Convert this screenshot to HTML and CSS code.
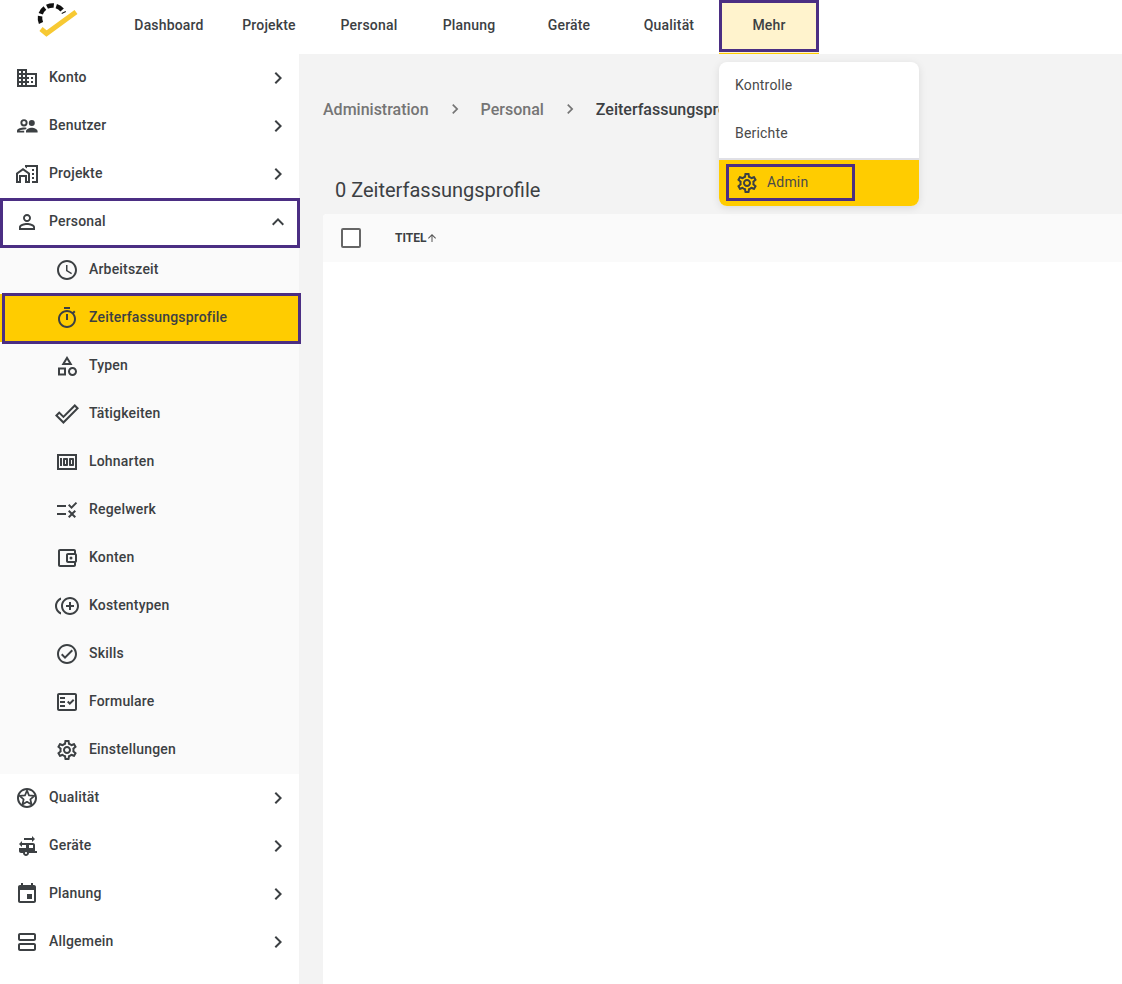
FILE: index.html
```html
<!doctype html>
<html lang="de">

<head>
    <meta charset="utf-8">
    <title>Zeiterfassungsprofile</title>
    <link rel="stylesheet" href="styles.css">
</head>

<body>
    <svg class="sprite" xmlns="http://www.w3.org/2000/svg">
        <symbol id="i-right" viewBox="0 0 24 24"><path d="M10 6L8.59 7.41 13.17 12l-4.58 4.59L10 18l6-6z"/></symbol>
        <symbol id="i-up" viewBox="0 0 24 24"><path d="M12 8l-6 6 1.41 1.41L12 10.83l4.59 4.58L18 14z"/></symbol>
        <symbol id="i-gear" viewBox="0 0 24 24"><path d="M19.43 12.98c.04-.32.07-.64.07-.98 0-.34-.03-.66-.07-.98l2.11-1.65c.19-.15.24-.42.12-.64l-2-3.46c-.09-.16-.26-.25-.44-.25-.06 0-.12.01-.17.03l-2.49 1c-.52-.4-1.08-.73-1.69-.98l-.38-2.65C14.46 2.18 14.25 2 14 2h-4c-.25 0-.46.18-.49.42l-.38 2.65c-.61.25-1.17.59-1.69.98l-2.49-1c-.06-.02-.12-.03-.18-.03-.17 0-.34.09-.43.25l-2 3.46c-.13.22-.07.49.12.64l2.11 1.65c-.04.32-.07.65-.07.98 0 .33.03.66.07.98l-2.11 1.65c-.19.15-.24.42-.12.64l2 3.46c.09.16.26.25.44.25.06 0 .12-.01.17-.03l2.49-1c.52.4 1.08.73 1.69.98l.38 2.65c.03.24.24.42.49.42h4c.25 0 .46-.18.49-.42l.38-2.65c.61-.25 1.17-.59 1.69-.98l2.49 1c.06.02.12.03.18.03.17 0 .34-.09.43-.25l2-3.46c.12-.22.07-.49-.12-.64l-2.11-1.65zm-1.98-1.71c.04.31.05.52.05.73 0 .21-.02.43-.05.73l-.14 1.13.89.7 1.08.84-.7 1.21-1.27-.51-1.04-.42-.9.68c-.43.32-.84.56-1.25.73l-1.06.43-.16 1.13-.2 1.35h-1.4l-.19-1.35-.16-1.13-1.06-.43c-.43-.18-.83-.41-1.23-.71l-.91-.7-1.06.43-1.27.51-.7-1.21 1.08-.84.89-.7-.14-1.13c-.03-.31-.05-.54-.05-.74s.02-.43.05-.73l.14-1.13-.89-.7-1.08-.84.7-1.21 1.27.51 1.04.42.9-.68c.43-.32.84-.56 1.25-.73l1.06-.43.16-1.13.2-1.35h1.39l.19 1.35.16 1.13 1.06.43c.43.18.83.41 1.23.71l.91.7 1.06-.43 1.27-.51.7 1.21-1.07.85-.89.7.14 1.13zM12 8c-2.21 0-4 1.79-4 4s1.79 4 4 4 4-1.79 4-4-1.79-4-4-4zm0 6c-1.1 0-2-.9-2-2s.9-2 2-2 2 .9 2 2-.9 2-2 2z"/></symbol>
    </svg>

    <header class="topbar">
        <div class="logo">
            <svg width="50" height="40" viewBox="0 0 50 40">
                <path class="logo-arc" d="M11 23 A12.5 12.5 0 0 1 34 13"/>
                <path class="logo-check" d="M11 29 L16.5 33.5 L46 12"/>
            </svg>
        </div>
        <nav class="topnav">
            <a class="topnav-item">Dashboard</a>
            <a class="topnav-item">Projekte</a>
            <a class="topnav-item">Personal</a>
            <a class="topnav-item">Planung</a>
            <a class="topnav-item">Geräte</a>
            <a class="topnav-item">Qualität</a>
            <a class="topnav-item topnav-active">Mehr<span class="mark mark-mehr"></span></a>
        </nav>
    </header>

    <div class="dropdown">
        <a class="dropdown-item">Kontrolle</a>
        <a class="dropdown-item">Berichte</a>
        <a class="dropdown-admin">
            <svg class="icon"><use href="#i-gear"/></svg>
            <span class="admin-label">Admin</span>
            <span class="mark mark-admin"></span>
        </a>
    </div>

    <div class="layout">
        <aside class="sidebar">
            <a class="row">
                <svg class="icon" viewBox="0 0 24 24"><path d="M12 7V3H2v18h20V7H12zM6 19H4v-2h2v2zm0-4H4v-2h2v2zm0-4H4V9h2v2zm0-4H4V5h2v2zm4 12H8v-2h2v2zm0-4H8v-2h2v2zm0-4H8V9h2v2zm0-4H8V5h2v2zm10 12h-8v-2h2v-2h-2v-2h2v-2h-2V9h8v10zm-2-8h-2v2h2v-2zm0 4h-2v2h2v-2z"/></svg>
                <span>Konto</span>
                <svg class="icon caret"><use href="#i-right"/></svg>
            </a>
            <a class="row">
                <svg class="icon" viewBox="0 0 24 24"><path fill-rule="evenodd" d="M9 5.2a3.6 3.6 0 1 1 0 7.2 3.6 3.6 0 0 1 0-7.2zm0 1.9a1.7 1.7 0 1 0 0 3.4 1.7 1.7 0 0 0 0-3.4zM2 18.6v-1.7c0-2.3 4.6-3.3 7-3.3.8 0 1.8.1 2.8.4l-1.4 1.6c-.5-.1-1-.1-1.4-.1-2 0-4.5.8-5 1.3h5.2v1.8H2zM16.8 6a3 3 0 1 1 0 6 3 3 0 0 1 0-6zM11 18.6v-1.3c0-2.3 3.6-3.5 5.8-3.5s5.8 1.2 5.8 3.5v1.3H11z"/></svg>
                <span>Benutzer</span>
                <svg class="icon caret"><use href="#i-right"/></svg>
            </a>
            <a class="row">
                <svg class="icon" viewBox="0 0 24 24"><path d="M1 11v10h5v-6h4v6h5V11L8 6l-7 5zm12 8h-1v-6H4v6H3v-7l5-3.5 5 3.5v7zM17 7h2v2h-2zm0 4h2v2h-2zm0 4h2v2h-2zM10 3v1.97l2 1.43V5h9v14h-4v2h6V3z"/></svg>
                <span>Projekte</span>
                <svg class="icon caret"><use href="#i-right"/></svg>
            </a>
            <a class="row">
                <svg class="icon" viewBox="0 0 24 24"><path d="M12 5.9c1.16 0 2.1.94 2.1 2.1s-.94 2.1-2.1 2.1S9.9 9.16 9.9 8s.94-2.1 2.1-2.1m0 9c2.97 0 6.1 1.46 6.1 2.1v1.1H5.9V17c0-.64 3.13-2.1 6.1-2.1M12 4C9.79 4 8 5.79 8 8s1.79 4 4 4 4-1.79 4-4-1.79-4-4-4zm0 9c-2.67 0-8 1.34-8 4v3h16v-3c0-2.66-5.33-4-8-4z"/></svg>
                <span>Personal</span>
                <svg class="icon caret"><use href="#i-up"/></svg>
                <span class="mark mark-personal"></span>
            </a>

            <div class="subnav">
                <a class="row sub">
                    <svg class="icon" viewBox="0 0 24 24"><path d="M11.99 2C6.47 2 2 6.48 2 12s4.47 10 9.99 10C17.52 22 22 17.52 22 12S17.52 2 11.99 2zM12 20c-4.42 0-8-3.58-8-8s3.58-8 8-8 8 3.58 8 8-3.58 8-8 8zm.5-13H11v6l5.25 3.15.75-1.23-4.5-2.67z"/></svg>
                    <span>Arbeitszeit</span>
                </a>
                <a class="row sub sub-active">
                    <svg class="icon" viewBox="0 0 24 24"><path d="M15 1H9v2h6V1zm-4 13h2V8h-2v6zm8.03-6.61l1.42-1.42c-.43-.51-.9-.99-1.41-1.41l-1.42 1.42C16.07 4.74 14.12 4 12 4c-4.97 0-9 4.03-9 9s4.02 9 9 9 9-4.03 9-9c0-2.12-.74-4.07-1.97-5.61zM12 20c-3.87 0-7-3.13-7-7s3.13-7 7-7 7 3.13 7 7-3.13 7-7 7z"/></svg>
                    <span>Zeiterfassungsprofile</span>
                    <span class="mark mark-sub"></span>
                </a>
                <a class="row sub">
                    <svg class="icon" viewBox="0 0 24 24"><path d="M12 2l-5.5 9h11L12 2zm0 3.84L13.93 9h-3.87L12 5.84zM17.5 13c-2.49 0-4.5 2.01-4.5 4.5s2.01 4.5 4.5 4.5 4.5-2.01 4.5-4.5-2.01-4.5-4.5-4.5zm0 7c-1.38 0-2.5-1.12-2.5-2.5s1.12-2.5 2.5-2.5 2.5 1.12 2.5 2.5-1.12 2.5-2.5 2.5zM3 21.5h8v-8H3v8zm2-6h4v4H5v-4z"/></svg>
                    <span>Typen</span>
                </a>
                <a class="row sub">
                    <svg class="icon" viewBox="0 0 24 24"><path d="M19.77 4.93l1.4 1.4L8.43 19.07l-5.6-5.6 1.4-1.4 4.2 4.2L19.77 4.93m0-2.83L8.43 13.44l-4.2-4.2L0 13.47l8.43 8.43L24 6.33 19.77 2.1z"/></svg>
                    <span>Tätigkeiten</span>
                </a>
                <a class="row sub">
                    <svg class="icon" viewBox="0 0 24 24"><path d="M5 8h2v8H5zm7 0H9c-.55 0-1 .45-1 1v6c0 .55.45 1 1 1h3c.55 0 1-.45 1-1V9c0-.55-.45-1-1-1zm-1 6h-1v-4h1v4zm7-6h-3c-.55 0-1 .45-1 1v6c0 .55.45 1 1 1h3c.55 0 1-.45 1-1V9c0-.55-.45-1-1-1zm-1 6h-1v-4h1v4z"/><path d="M2 4v16h20V4H2zm2 14V6h16v12H4z"/></svg>
                    <span>Lohnarten</span>
                </a>
                <a class="row sub">
                    <svg class="icon" viewBox="0 0 24 24"><path d="M16.54 11L13 7.46l1.41-1.41 2.12 2.12 4.24-4.24 1.41 1.41L16.54 11zM11 7H2v2h9V7zm10 6.41L19.59 12 17 14.59 14.41 12 13 13.41 15.59 16 13 18.59 14.41 20 17 17.41 19.59 20 21 18.59 18.41 16 21 13.41zM11 15H2v2h9v-2z"/></svg>
                    <span>Regelwerk</span>
                </a>
                <a class="row sub">
                    <svg class="icon" viewBox="0 0 24 24"><path d="M21 7.28V5c0-1.1-.9-2-2-2H5c-1.11 0-2 .9-2 2v14c0 1.1.89 2 2 2h14c1.1 0 2-.9 2-2v-2.28c.59-.35 1-.98 1-1.72V9c0-.74-.41-1.37-1-1.72zM20 9v6h-7V9h7zM5 19V5h14v2h-6c-1.1 0-2 .9-2 2v6c0 1.1.9 2 2 2h6v2H5z"/><circle cx="16" cy="12" r="1.5"/></svg>
                    <span>Konten</span>
                </a>
                <a class="row sub">
                    <svg class="icon" viewBox="0 0 24 24"><path d="M16 8h-2v3h-3v2h3v3h2v-3h3v-2h-3zM2 12c0-2.79 1.64-5.2 4.01-6.32V3.52C2.52 4.76 0 8.09 0 12s2.52 7.24 6.01 8.48v-2.16C3.64 17.2 2 14.79 2 12zm13-9c-4.96 0-9 4.04-9 9s4.04 9 9 9 9-4.04 9-9-4.04-9-9-9zm0 16c-3.86 0-7-3.14-7-7s3.14-7 7-7 7 3.14 7 7-3.14 7-7 7z"/></svg>
                    <span>Kostentypen</span>
                </a>
                <a class="row sub">
                    <svg class="icon" viewBox="0 0 24 24"><path d="M12 2C6.48 2 2 6.48 2 12s4.48 10 10 10 10-4.48 10-10S17.52 2 12 2zm0 18c-4.41 0-8-3.59-8-8s3.59-8 8-8 8 3.59 8 8-3.59 8-8 8zm4.59-12.42L10 14.17l-2.59-2.58L6 13l4 4 8-8z"/></svg>
                    <span>Skills</span>
                </a>
                <a class="row sub">
                    <svg class="icon" viewBox="0 0 24 24"><path d="M20 3H4c-1.1 0-2 .9-2 2v14c0 1.1.9 2 2 2h16c1.1 0 2-.9 2-2V5c0-1.1-.9-2-2-2zm0 16H4V5h16v14z"/><path d="M19.41 10.42L17.99 9l-3.17 3.17-1.41-1.42L12 12.16 14.82 15zM5 7h5v2H5zM5 11h5v2H5zM5 15h5v2H5z"/></svg>
                    <span>Formulare</span>
                </a>
                <a class="row sub">
                    <svg class="icon"><use href="#i-gear"/></svg>
                    <span>Einstellungen</span>
                </a>
            </div>

            <a class="row">
                <svg class="icon" viewBox="0 0 24 24"><path d="M11.99 2C6.47 2 2 6.48 2 12s4.47 10 9.99 10C17.52 22 22 17.52 22 12S17.52 2 11.99 2zM12 20c-4.42 0-8-3.58-8-8s3.58-8 8-8 8 3.58 8 8-3.58 8-8 8z"/><polygon class="star" points="12,4.5 14.06,9.47 19.4,9.9 15.33,13.38 16.6,18.6 12,15.8 7.4,18.6 8.67,13.38 4.6,9.9 9.94,9.47"/></svg>
                <span>Qualität</span>
                <svg class="icon caret"><use href="#i-right"/></svg>
            </a>
            <a class="row">
                <svg class="icon" viewBox="0 0 24 24"><path d="M20 17v-6c0-1.1-.9-2-2-2H7V7l-3 3 3 3v-2h4v3H4v3c0 1.1.9 2 2 2h2c0 1.66 1.34 3 3 3s3-1.34 3-3h8v-2h-2zm-9 3c-.55 0-1-.45-1-1s.45-1 1-1 1 .45 1 1-.45 1-1 1zm7-6h-4v-3h4v3zM17 2v2H9v2h8v2l3-3z"/></svg>
                <span>Geräte</span>
                <svg class="icon caret"><use href="#i-right"/></svg>
            </a>
            <a class="row">
                <svg class="icon" viewBox="0 0 24 24"><path d="M17 12h-5v5h5v-5zM16 1v2H8V1H6v2H5c-1.11 0-1.99.9-1.99 2L3 19c0 1.1.89 2 2 2h14c1.1 0 2-.9 2-2V5c0-1.1-.9-2-2-2h-1V1h-2zm3 18H5V8h14v11z"/></svg>
                <span>Planung</span>
                <svg class="icon caret"><use href="#i-right"/></svg>
            </a>
            <a class="row">
                <svg class="icon" viewBox="0 0 24 24"><path fill-rule="evenodd" d="M5 3h14c1.1 0 2 .9 2 2v4c0 1.1-.9 2-2 2H5c-1.1 0-2-.9-2-2V5c0-1.1.9-2 2-2zm0 2v4h14V5H5zm0 8h14c1.1 0 2 .9 2 2v4c0 1.1-.9 2-2 2H5c-1.1 0-2-.9-2-2v-4c0-1.1.9-2 2-2zm0 2v4h14v-4H5z"/></svg>
                <span>Allgemein</span>
                <svg class="icon caret"><use href="#i-right"/></svg>
            </a>
        </aside>

        <main class="content">
            <div class="breadcrumb">
                <span>Administration</span>
                <span class="crumb-sep"><svg><use href="#i-right"/></svg></span>
                <span>Personal</span>
                <span class="crumb-sep"><svg><use href="#i-right"/></svg></span>
                <span class="crumb-current">Zeiterfassungsprofile</span>
            </div>
            <h1 class="title">0 Zeiterfassungsprofile</h1>
            <section class="table">
                <div class="table-head">
                    <span class="checkbox"></span>
                    <span class="col-title">TITEL</span>
                    <svg class="sort" viewBox="0 0 24 24"><path d="M4 12l1.41 1.41L11 7.83V20h2V7.83l5.58 5.59L20 12l-8-8-8 8z"/></svg>
                </div>
            </section>
        </main>
    </div>
</body>

</html>
```

FILE: styles.css
```css
* {
    box-sizing: border-box;
}
html, body {
    height: 100%;
}
body {
    margin: 0;
    position: relative;
    overflow: hidden;
    background: #fff;
    color: #3c4043;
    font-family: Roboto, "Liberation Sans", sans-serif;
    font-size: 14px;
    font-weight: 480;
    letter-spacing: .18px;
}
.sprite {
    display: none;
}
.icon {
    width: 24px;
    height: 24px;
    flex: none;
    fill: #3c4043;
}
.star {
    fill: none;
    stroke: #3c4043;
    stroke-width: 1.8;
    stroke-linejoin: round;
}

/* annotation frames drawn over the page */
.mark {
    position: absolute;
    border: 3px solid #4b2e83;
    pointer-events: none;
    z-index: 5;
}
.mark-mehr {
    inset: 0;
    bottom: 1px;
}
.mark-personal {
    inset: 0 -1px -2px 0;
}
.mark-sub {
    inset: -1px -2px -2px 2px;
}
.mark-admin {
    left: 7px;
    top: 4px;
    width: 129px;
    height: 37px;
}

/* top bar */
.topbar {
    display: flex;
    height: 54px;
    background: #fff;
}
.logo {
    width: 119px;
    padding: 0 0 0 30px;
    flex: none;
}
.logo-arc {
    fill: none;
    stroke: #111;
    stroke-width: 4.5;
    stroke-dasharray: 7 2.5;
}
.logo-check {
    fill: none;
    stroke: #f7c933;
    stroke-width: 5;
}
.topnav {
    display: flex;
}
.topnav-item {
    position: relative;
    width: 100px;
    height: 54px;
    display: flex;
    align-items: center;
    justify-content: center;
    padding-bottom: 5px;
    line-height: 20px;
}
.topnav-active {
    background: #fff3cd;
    border-bottom: 1px solid #ffcc00;
    padding-bottom: 4px;
}

/* dropdown of "Mehr" */
.dropdown {
    position: absolute;
    left: 719px;
    top: 62px;
    width: 200px;
    height: 144px;
    z-index: 4;
    background: #fff;
    border-radius: 8px;
    box-shadow: 0 2px 8px rgba(0, 0, 0, .1);
    overflow: hidden;
    font-weight: 400;
    color: #4a4a4a;
}
.dropdown-item {
    display: flex;
    align-items: center;
    height: 48px;
    padding: 0 16px 2px;
}
.dropdown-admin {
    position: relative;
    display: flex;
    align-items: center;
    gap: 8px;
    height: 48px;
    padding: 0 0 0 16px;
    background: #ffcc00;
    border-top: 2px solid #e0e0e6;
}
.admin-label {
    padding-bottom: 2px;
}

/* sidebar and main */
.layout {
    display: flex;
    height: 930px;
}
.sidebar {
    width: 299px;
    flex: none;
    background: #fff;
    position: relative;
}
.row {
    position: relative;
    display: flex;
    align-items: center;
    gap: 10px;
    height: 48px;
    padding: 0 9px 0 15px;
}
.row > span {
    padding-bottom: 2px;
}
.caret {
    margin-left: auto;
}
.subnav {
    background: #fafafa;
}
.sub {
    padding-left: 55px;
}
.sub-active {
    background: #ffcc00;
}
.content {
    flex: 1;
    min-width: 0;
    background: #f3f3f3;
    padding: 43px 0 0 24px;
}
.breadcrumb {
    display: flex;
    align-items: center;
    height: 24px;
    font-size: 16px;
    font-weight: 500;
    letter-spacing: 0;
    color: #757575;
    white-space: nowrap;
}
.crumb-sep {
    width: 52px;
    display: flex;
    justify-content: center;
}
.crumb-sep svg {
    width: 20px;
    height: 20px;
    fill: #757575;
}
.crumb-current {
    color: #3c4043;
}
.title {
    margin: 55px 0 0 12px;
    height: 28px;
    font-size: 20px;
    line-height: 28px;
    font-weight: 400;
    letter-spacing: 0;
    color: #3c4043;
}
.table {
    margin-top: 10px;
    height: 770px;
    background: #fff;
    border-radius: 4px 0 0 0;
}
.table-head {
    display: flex;
    align-items: center;
    height: 48px;
    padding-left: 18px;
    background: #fafafa;
    border-radius: 4px 0 0 0;
}
.checkbox {
    width: 20px;
    height: 20px;
    border: 2px solid #666;
    border-radius: 2px;
    background: #fff;
}
.col-title {
    margin-left: 34px;
    font-size: 12px;
    font-weight: 700;
    letter-spacing: 0;
    color: #3c4043;
}
.sort {
    width: 12px;
    height: 12px;
    fill: #555;
}
```
